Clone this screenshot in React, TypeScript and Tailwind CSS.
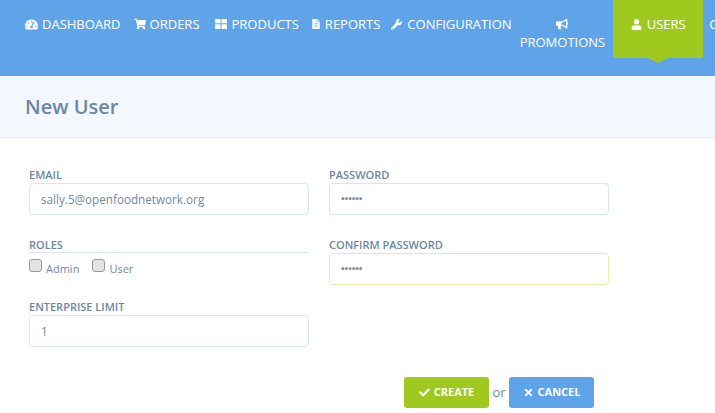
import { FaBullhorn, FaCheck, FaFileAlt, FaShoppingCart, FaTachometerAlt, FaTimes, FaUser, FaWrench } from "react-icons/fa";

const font = { fontFamily: '"Open Sans", sans-serif' };

function GridIcon() {
  return (
    <svg width="12" height="10" viewBox="0 0 12 10" fill="currentColor">
      <rect x="0" y="0" width="5.5" height="4.3" />
      <rect x="6.5" y="0" width="5.5" height="4.3" />
      <rect x="0" y="5.3" width="5.5" height="4.7" />
      <rect x="6.5" y="5.3" width="5.5" height="4.7" />
    </svg>
  );
}

function Field({ label, value, dots, className }: { label: string; value?: string; dots?: boolean; className?: string }) {
  return (
    <div className="flex flex-col">
      <label className="h-[16px] text-[11px] leading-[16px] font-semibold uppercase text-[#6b87a3]">{label}</label>
      <div className={`flex h-[32px] items-center rounded-[4px] border bg-white px-[11px] pt-[1px] text-[11.7px] text-[#6f8aa3] ${className ?? "border-[#d6e6fa]"}`}>
        {dots ? <span className="text-[9.5px] font-bold">••••••</span> : value}
      </div>
    </div>
  );
}

function Check({ label }: { label: string }) {
  return (
    <span className="flex items-start gap-[4px]">
      <span className="mt-[-1px] h-[13px] w-[13px] rounded-[3px] border border-[#9a9a9a] bg-[#e4e4e4]" />
      <span className="mt-[2px] text-[11px] leading-[14px] text-[#6f8aa3]">{label}</span>
    </span>
  );
}

export default function App() {
  return (
    <div className="h-[413px] w-[715px] overflow-hidden bg-white" style={font}>
      <nav className="flex h-[76px] items-start overflow-hidden bg-[#5fa4e8] pl-[25px] text-[13px] leading-[18px] text-white">
        <a className="mt-[15px] flex items-center gap-[4px]"><FaTachometerAlt size={13} />DASHBOARD</a>
        <a className="mt-[15px] ml-[13px] flex items-center gap-[4px]"><FaShoppingCart size={12} />ORDERS</a>
        <a className="mt-[15px] ml-[15px] flex items-center gap-[5px]"><GridIcon />PRODUCTS</a>
        <a className="mt-[15px] ml-[12px] flex items-center gap-[4px]"><FaFileAlt size={10} />REPORTS</a>
        <a className="mt-[15px] ml-[11px] flex items-center gap-[5px]"><FaWrench size={11} />CONFIGURATION</a>
        <a className="mt-[15px] ml-[8px] flex flex-col items-center">
          <FaBullhorn size={12} className="mt-[3px] mb-[3px]" />
          PROMOTIONS
        </a>
        <div className="relative ml-[8px] h-[58px] w-[90px] shrink-0 bg-[#a0c920]">
          <a className="mt-[15px] flex items-center justify-center gap-[5px]"><FaUser size={11} />USERS</a>
          <span className="absolute top-[58px] left-[35px] h-0 w-0 border-x-[10px] border-t-[5px] border-x-transparent border-t-[#a0c920]" />
        </div>
        <a className="mt-[15px] ml-[6px] shrink-0">C</a>
      </nav>

      <header className="flex h-[62px] items-center border-b border-[#e3edf8] bg-[#f3f8ff] pl-[25px]">
        <h1 className="text-[20px] font-semibold text-[#6b87a3]">New User</h1>
      </header>

      <form className="w-[609px] pt-[29px] pl-[29px]">
        <div className="grid grid-cols-[280px_280px] gap-x-[20px]">
          <div className="flex flex-col">
            <Field label="Email" value="sally.5@openfoodnetwork.org" />
            <div className="mt-[22px]">
              <div className="h-[16px] border-b border-[#dce8f5] text-[11px] leading-[16px] font-semibold text-[#6b87a3]">ROLES</div>
              <div className="mt-[7px] flex gap-[13px]">
                <Check label="Admin" />
                <Check label="User" />
              </div>
            </div>
            <div className="mt-[23px]">
              <Field label="Enterprise Limit" value="1" />
            </div>
          </div>
          <div className="flex flex-col gap-[22px]">
            <Field label="Password" dots />
            <Field label="Confirm Password" dots className="border-[#e0efa5]" />
          </div>
        </div>
        <div className="mt-[30px] ml-[375px] flex items-center text-[13px] text-[#6f8aa3]">
          <button type="button" className="flex h-[31px] w-[85px] shrink-0 items-center justify-center gap-[4px] rounded-[3px] bg-[#a0c920] text-[11px] font-bold text-white">
            <FaCheck size={11} />CREATE
          </button>
          <span className="w-[20px] text-center">or</span>
          <button type="button" className="flex h-[31px] w-[85px] shrink-0 items-center justify-center gap-[4px] rounded-[3px] bg-[#5fa4e8] text-[11px] font-bold text-white">
            <FaTimes size={11} />CANCEL
          </button>
        </div>
      </form>
    </div>
  );
}
